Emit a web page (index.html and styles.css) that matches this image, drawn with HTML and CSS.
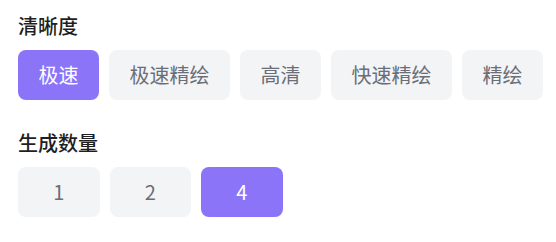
FILE: index.html
```html
<!DOCTYPE html>
<html lang="zh-CN">
<head>
<meta charset="utf-8">
<link rel="stylesheet" href="styles.css">
</head>
<body>
<div class="panel">
  <section class="group">
    <div class="label">清晰度</div>
    <div class="options">
      <button class="opt active">极速</button>
      <button class="opt">极速精绘</button>
      <button class="opt">高清</button>
      <button class="opt">快速精绘</button>
      <button class="opt">精绘</button>
    </div>
  </section>
  <section class="group">
    <div class="label">生成数量</div>
    <div class="options">
      <button class="opt num">1</button>
      <button class="opt num">2</button>
      <button class="opt num active">4</button>
    </div>
  </section>
</div>
</body>
</html>
```
FILE: styles.css
```css
html, body {
  margin: 0;
  padding: 0;
  background: #ffffff;
}
body {
  font-family: "Noto Sans CJK SC", "Noto Sans", sans-serif;
}
.panel {
  padding: 12px 18px;
  display: flex;
  flex-direction: column;
  gap: 29px;
}
.label {
  font-size: 20px;
  line-height: 28px;
  font-weight: 500;
  color: #1f1f1f;
  margin-bottom: 10px;
}
.options {
  display: flex;
  gap: 10px;
}
.opt {
  flex: 0 0 auto;
  white-space: nowrap;
  height: 50px;
  padding: 0 20.5px;
  min-width: 81px;
  border: none;
  border-radius: 8px;
  background: #f3f4f6;
  color: #6b6e76;
  font-family: "Noto Sans CJK SC", "Noto Sans", sans-serif;
  font-size: 20px;
  line-height: 28px;
  font-weight: 400;
  cursor: pointer;
}
.opt.num {
  width: 81.5px;
}
.opt.active {
  background: #8b74f8;
  color: #ffffff;
}
```
